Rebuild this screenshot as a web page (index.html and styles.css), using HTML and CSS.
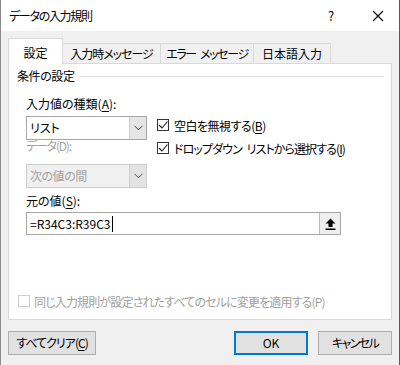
FILE: index.html
```html
<!DOCTYPE html>
<html lang="ja">
<head>
    <meta charset="UTF-8">
    <title>データの入力規則</title>
    <link rel="stylesheet" href="styles.css">
</head>
<body>
    <div class="window">
        <div class="titlebar">
            <span class="title">データの入力規則</span>
            <span class="help">?</span>
            <span class="close">
                <svg width="12" height="12" viewBox="0 0 12 12"><path d="M1 1 L11 11 M11 1 L1 11" stroke="#000" stroke-width="1.1" fill="none"/></svg>
            </span>
        </div>
        <div class="content">
            <div class="tabs">
                <div class="tab active">設定</div>
                <div class="tab w1">入力時メッセージ</div>
                <div class="tab w2">エラー メッセージ</div>
                <div class="tab w3">日本語入力</div>
            </div>
            <div class="panel">
                <div class="group-title"><span>条件の設定</span><div class="rule"></div></div>
                <div class="group-body">
                    <div class="top-row">
                        <div class="left-col">
                            <div class="label first">入力値の種類(<u>A</u>):</div>
                            <div class="combo">
                                <span class="combo-text">リスト</span>
                                <span class="combo-btn"><svg width="9" height="6" viewBox="0 0 9 6"><path d="M0.5 0.8 L4.5 4.8 L8.5 0.8" stroke="#444" stroke-width="1" fill="none"/></svg></span>
                            </div>
                            <div class="label disabled">データ(D):</div>
                            <div class="combo off">
                                <span class="combo-text">次の値の間</span>
                                <span class="combo-btn"><svg width="9" height="6" viewBox="0 0 9 6"><path d="M0.5 0.8 L4.5 4.8 L8.5 0.8" stroke="#555" stroke-width="1" fill="none"/></svg></span>
                            </div>
                        </div>
                        <div class="right-col">
                            <label class="check blank"><span class="box"><svg width="10" height="10" viewBox="0 0 10 10"><path d="M1 5 L4 8 L9.5 1.5" stroke="#222" stroke-width="1.1" fill="none"/></svg></span>空白を無視する(<u>B</u>)</label>
                            <label class="check dropdown"><span class="box"><svg width="10" height="10" viewBox="0 0 10 10"><path d="M1 5 L4 8 L9.5 1.5" stroke="#222" stroke-width="1.1" fill="none"/></svg></span>ドロップダウン リストから選択する(<u>I</u>)</label>
                        </div>
                    </div>
                    <div class="label source">元の値(<u>S</u>):</div>
                    <div class="ref-input">
                        <span class="ref-text">=R34C3:R39C3</span><span class="caret"></span>
                        <span class="ref-btn">
                            <svg width="11" height="12" viewBox="0 0 11 12"><path d="M5.5 0.5 L10.5 5.5 L7.5 5.5 L7.5 9 L3.5 9 L3.5 5.5 L0.5 5.5 Z" fill="#000"/><rect x="0.5" y="10.5" width="10" height="1.5" fill="#000"/></svg>
                        </span>
                    </div>
                </div>
                <label class="check apply"><span class="box empty"></span>同じ入力規則が設定されたすべてのセルに変更を適用する(P)</label>
            </div>
            <div class="buttons">
                <button class="btn clear">すべてクリア(<u>C</u>)</button>
                <button class="btn ok">OK</button>
                <button class="btn cancel">キャンセル</button>
            </div>
        </div>
    </div>
</body>
</html>
```

FILE: styles.css
```css
body {
    margin: 0;
    font-family: "Noto Sans CJK JP", "Noto Sans", sans-serif;
    font-size: 12px;
    font-feature-settings: "palt";
    color: #000;
    background: #f0f0f0;
    white-space: nowrap;
}
.window {
    width: 400px;
    height: 365px;
    box-sizing: border-box;
    border-left: 1px solid #8a8a8a;
    border-right: 1px solid #5a5a5a;
    background: #f0f0f0;
    overflow: hidden;
}
.titlebar {
    height: 31px;
    background: #fff;
    display: flex;
    align-items: center;
    padding-left: 8px;
}
.title {
    flex: 1;
    line-height: 14px;
    letter-spacing: -1.3px;
}
.help {
    width: 14px;
    text-align: center;
    margin-right: 34px;
    font-size: 13px;
}
.close {
    display: flex;
    width: 12px;
    margin-right: 15px;
}
.content {
    padding: 7px 7px 0 7px;
}
.tabs {
    display: flex;
    align-items: flex-end;
    height: 25px;
    position: relative;
    z-index: 1;
}
.tab {
    box-sizing: border-box;
    height: 20px;
    border-top: 1px solid #d9d9d9;
    border-right: 1px solid #d9d9d9;
    text-align: center;
    line-height: 18px;
    padding-top: 1px;
}
.tab.active {
    width: 55px;
    height: 26px;
    margin-bottom: -1px;
    border: 1px solid #d9d9d9;
    border-bottom: none;
    background: #fff;
    line-height: 14px;
    padding-top: 7px;
}
.w1 { width: 98px; letter-spacing: -1px; }
.w2 { width: 93px; letter-spacing: -1.4px; word-spacing: 3px; }
.w3 { width: 77px; }
.panel {
    box-sizing: border-box;
    height: 257px;
    background: #fff;
    border: 1px solid #d9d9d9;
    display: flex;
    flex-direction: column;
    padding: 5px 7px 9px 8px;
}
.group-title {
    display: flex;
    align-items: center;
    line-height: 14px;
    letter-spacing: -0.4px;
}
.group-title .rule {
    flex: 1;
    border-top: 1px solid #dcdcdc;
    margin-left: 4px;
    margin-top: 1px;
}
.group-body {
    padding-left: 9px;
}
.top-row {
    display: flex;
}
.left-col {
    width: 121px;
}
.label {
    line-height: 12px;
}
.label.first {
    margin-top: 15px;
}
.label.disabled {
    color: #a0a0a0;
    margin-top: 0;
    letter-spacing: -1.2px;
}
.label.source {
    margin-top: 7px;
}
.combo {
    box-sizing: border-box;
    height: 24px;
    margin-top: 6px;
    border: 1px solid #a6a6a6;
    display: flex;
    background: #fff;
}
.combo.off {
    margin-top: 12px;
    border-color: #cccccc;
    background: #f0f0f0;
    color: #a0a0a0;
    letter-spacing: -0.5px;
}
.combo-text {
    flex: 1;
    padding-left: 3px;
    line-height: 22px;
}
.combo-btn {
    width: 16px;
    background: #e5e5e5;
    border-left: 1px solid #cfcfcf;
    display: flex;
    align-items: center;
    justify-content: center;
}
.combo.off .combo-btn {
    background: #e3e3e3;
}
.right-col {
    margin-left: 10px;
    padding-top: 33px;
}
.check {
    display: flex;
    align-items: center;
    height: 18px;
}
.check.blank {
    letter-spacing: -0.5px;
}
.check.dropdown {
    margin-top: 5px;
    letter-spacing: -0.9px;
    word-spacing: 3px;
}
.box {
    box-sizing: border-box;
    width: 12px;
    height: 12px;
    border: 1px solid #333;
    margin-right: 5px;
    display: flex;
    align-items: center;
    justify-content: center;
    background: #fff;
    flex-shrink: 0;
}
.box.empty {
    border-color: #cccccc;
}
.ref-input {
    box-sizing: border-box;
    width: 315px;
    height: 23px;
    margin-top: 5px;
    border: 1px solid #a6a6a6;
    display: flex;
    align-items: center;
    padding-left: 3px;
}
.ref-text {
    line-height: 14px;
}
.caret {
    width: 1px;
    height: 16px;
    background: #000;
    margin-left: 1px;
}
.ref-btn {
    margin-left: auto;
    width: 20px;
    height: 21px;
    background: #eeeeee;
    border-left: 1px solid #bdbdbd;
    display: flex;
    align-items: center;
    justify-content: center;
}
.check.apply {
    margin-top: auto;
    color: #a0a0a0;
    padding-left: 1px;
    letter-spacing: -0.85px;
}
.check.apply .box {
    margin-right: 4px;
}
.buttons {
    display: flex;
    margin-top: 11px;
}
.btn {
    box-sizing: border-box;
    height: 24px;
    font: inherit;
    font-feature-settings: "palt";
    color: #000;
    background: #e1e1e1;
    border: 1px solid #adadad;
    padding: 0;
    line-height: 20px;
    white-space: nowrap;
}
.btn.clear {
    width: 88px;
    letter-spacing: -1px;
}
.btn.ok {
    width: 74px;
    margin-left: auto;
    border: 2px solid #0078d7;
}
.btn.cancel {
    width: 74px;
    margin-left: 10px;
    letter-spacing: -1.6px;
}
u {
    text-decoration-thickness: 1px;
    text-underline-offset: 2px;
}
```
